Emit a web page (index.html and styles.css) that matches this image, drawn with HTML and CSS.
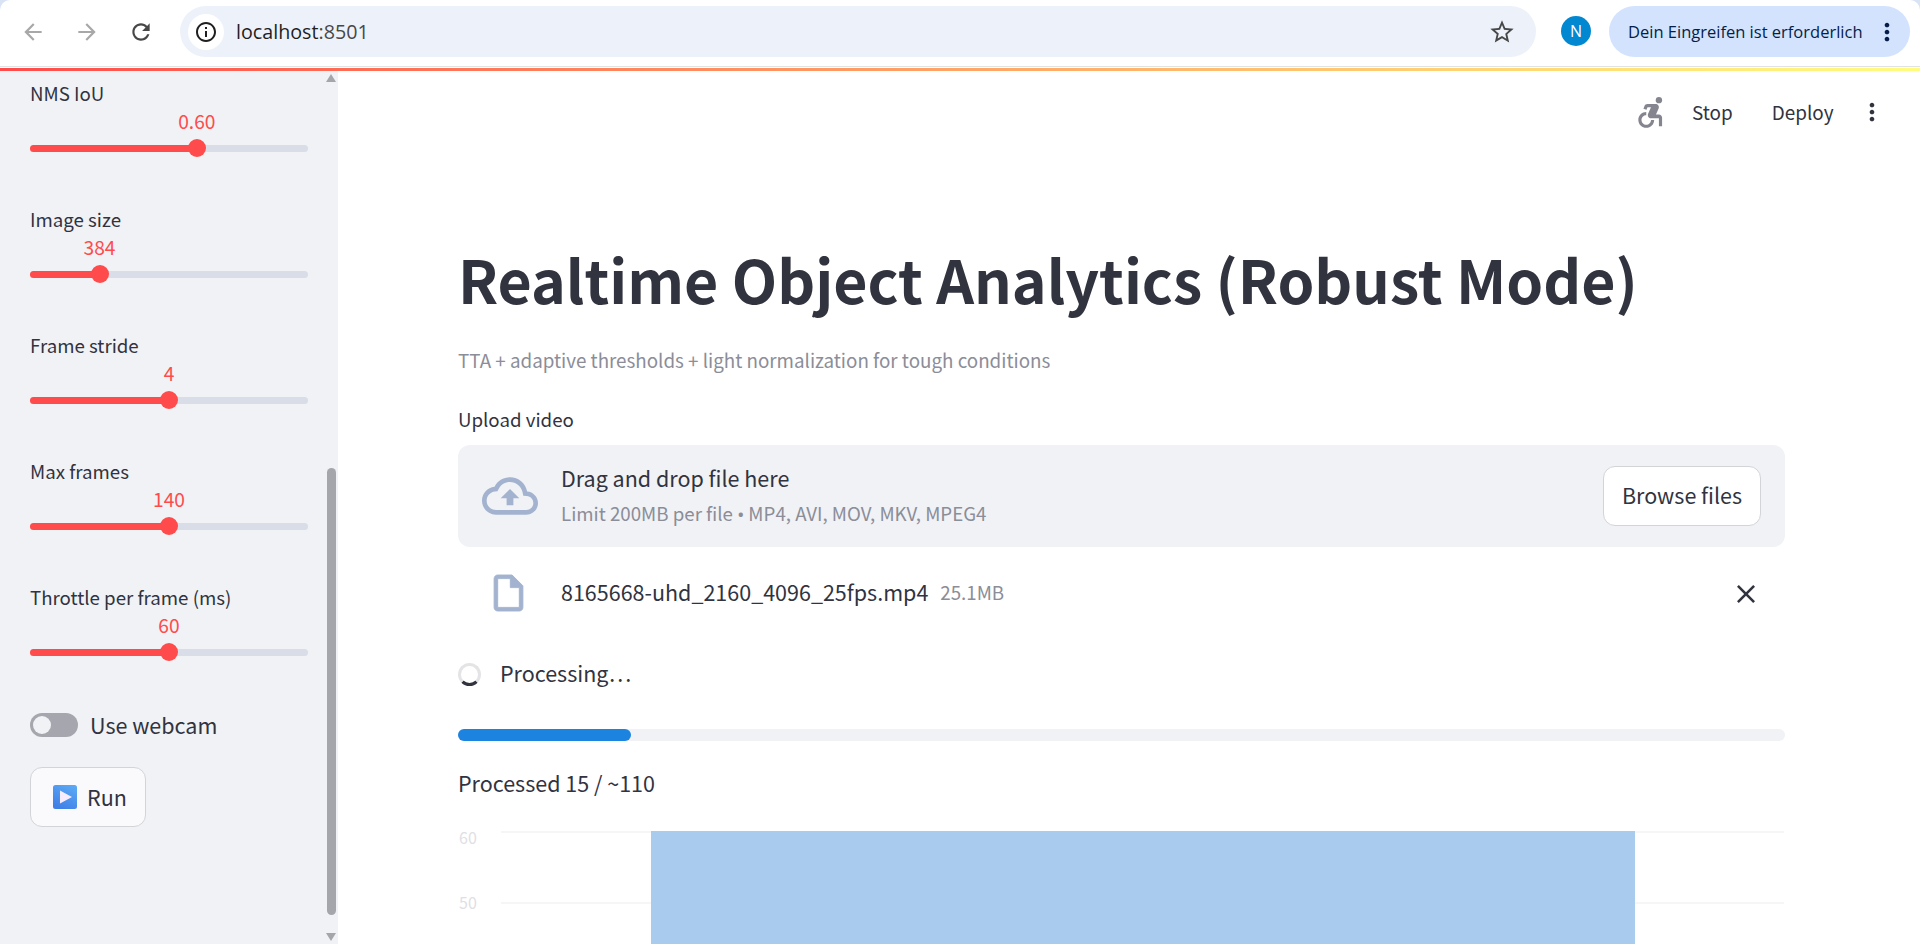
FILE: index.html
```html
<!DOCTYPE html>
<html lang="en">
<head>
<meta charset="utf-8">
<title>Realtime Object Analytics</title>
<link rel="stylesheet" href="styles.css">
</head>
<body>
<header class="browser">
  <div class="nav">
    <svg class="nav-icon dim" viewBox="0 0 24 24"><path d="M20 11H7.83l5.59-5.59L12 4l-8 8 8 8 1.41-1.41L7.83 13H20v-2z"/></svg>
    <svg class="nav-icon dim" viewBox="0 0 24 24"><path d="M12 4l-1.41 1.41L16.17 11H4v2h12.17l-5.58 5.59L12 20l8-8z"/></svg>
    <svg class="nav-icon" viewBox="0 0 24 24"><path d="M17.65 6.35C16.2 4.9 14.21 4 12 4c-4.42 0-7.99 3.58-7.99 8s3.57 8 7.99 8c3.73 0 6.84-2.55 7.73-6h-2.08c-.82 2.33-3.04 4-5.65 4-3.31 0-6-2.69-6-6s2.69-6 6-6c1.66 0 3.14.69 4.22 1.78L13 11h7V4l-2.35 2.35z"/></svg>
  </div>
  <div class="omnibox">
    <span class="site-chip"><svg class="info" viewBox="0 0 24 24"><path d="M11 7h2v2h-2zm0 4h2v6h-2zm1-9C6.48 2 2 6.48 2 12s4.48 10 10 10 10-4.48 10-10S17.52 2 12 2zm0 18c-4.41 0-8-3.59-8-8s3.59-8 8-8 8 3.59 8 8-3.59 8-8 8z"/></svg></span>
    <span class="url">localhost<span class="port">:8501</span></span>
    <svg class="star" viewBox="0 0 24 24"><path d="M22 9.24l-7.19-.62L12 2 9.19 8.63 2 9.24l5.46 4.73L5.82 21 12 17.27 18.18 21l-1.63-7.03L22 9.24zM12 15.4l-3.76 2.27 1-4.28-3.32-2.88 4.38-.38L12 6.1l1.71 4.04 4.38.38-3.32 2.88 1 4.28L12 15.4z"/></svg>
  </div>
  <span class="avatar">N</span>
  <div class="notice">
    <span class="notice-text">Dein Eingreifen ist erforderlich</span>
    <svg class="notice-dots" viewBox="0 0 24 24"><path d="M12 8c1.1 0 2-.9 2-2s-.9-2-2-2-2 .9-2 2 .9 2 2 2zm0 2c-1.1 0-2 .9-2 2s.9 2 2 2 2-.9 2-2-.9-2-2-2zm0 6c-1.1 0-2 .9-2 2s.9 2 2 2 2-.9 2-2-.9-2-2-2z"/></svg>
  </div>
</header>
<div class="rainbow"></div>
<div class="app">
  <aside class="sidebar">
    <div class="side-content">
      <div class="slider">
        <div class="slider-label">NMS IoU</div>
        <div class="slider-rail">
          <div class="slider-fill" style="width:60%"><span class="slider-value">0.60</span><span class="slider-thumb"></span></div>
        </div>
      </div>
      <div class="slider">
        <div class="slider-label">Image size</div>
        <div class="slider-rail">
          <div class="slider-fill" style="width:25%"><span class="slider-value">384</span><span class="slider-thumb"></span></div>
        </div>
      </div>
      <div class="slider">
        <div class="slider-label">Frame stride</div>
        <div class="slider-rail">
          <div class="slider-fill" style="width:50%"><span class="slider-value">4</span><span class="slider-thumb"></span></div>
        </div>
      </div>
      <div class="slider">
        <div class="slider-label">Max frames</div>
        <div class="slider-rail">
          <div class="slider-fill" style="width:50%"><span class="slider-value">140</span><span class="slider-thumb"></span></div>
        </div>
      </div>
      <div class="slider">
        <div class="slider-label">Throttle per frame (ms)</div>
        <div class="slider-rail">
          <div class="slider-fill" style="width:50%"><span class="slider-value">60</span><span class="slider-thumb"></span></div>
        </div>
      </div>
      <div class="toggle-row">
        <span class="toggle"><span class="toggle-knob"></span></span>
        <span class="toggle-label">Use webcam</span>
      </div>
      <button class="btn run-btn" type="button">
        <svg class="play" viewBox="0 0 24 24">
          <defs><linearGradient id="playGrad" x1="0.8" y1="0" x2="0.3" y2="1"><stop offset="0" stop-color="#5aa9f5"/><stop offset="1" stop-color="#3f7fe6"/></linearGradient></defs>
          <rect x="0" y="0" width="24" height="24" rx="2.5" fill="url(#playGrad)"/>
          <path d="M7 5.5L19 12L7 18.5z" fill="#f6ecfb"/>
        </svg>
        <span>Run</span>
      </button>
    </div>
    <div class="scrollbar">
      <span class="arrow-up"></span>
      <span class="scroll-thumb"></span>
      <span class="arrow-down"></span>
    </div>
  </aside>
  <main class="main">
    <div class="toolbar">
      <svg class="a11y" viewBox="0 0 24 24"><circle cx="17" cy="4.54" r="2"/><path d="M14 17h-2c0 1.65-1.35 3-3 3s-3-1.35-3-3 1.35-3 3-3v-2c-2.76 0-5 2.24-5 5s2.24 5 5 5 5-2.24 5-5zm3-3.5h-1.86l1.67-3.67C17.42 8.5 16.44 7 14.96 7h-5.2c-.81 0-1.54.47-1.87 1.2L7.22 10l1.92.53L9.79 9H12l-1.83 4.1c-.6 1.33.39 2.9 1.85 2.9H17v5h2v-5.5c0-1.1-.9-2-2-2z"/></svg>
      <span class="tool-link stop">Stop</span>
      <span class="tool-link deploy">Deploy</span>
      <svg class="tool-dots" viewBox="0 0 24 24"><path d="M12 8c1.1 0 2-.9 2-2s-.9-2-2-2-2 .9-2 2 .9 2 2 2zm0 2c-1.1 0-2 .9-2 2s.9 2 2 2 2-.9 2-2-.9-2-2-2zm0 6c-1.1 0-2 .9-2 2s.9 2 2 2 2-.9 2-2-.9-2-2-2z"/></svg>
    </div>
    <section class="content">
      <h1 class="title">Realtime Object Analytics (Robust Mode)</h1>
      <p class="caption">TTA + adaptive thresholds + light normalization for tough conditions</p>
      <div class="upload-label">Upload video</div>
      <div class="dropzone">
        <svg class="cloud" viewBox="0 0 24 24"><path d="M19.35 10.04C18.67 6.59 15.64 4 12 4 9.11 4 6.6 5.64 5.35 8.04 2.34 8.36 0 10.91 0 14c0 3.31 2.69 6 6 6h13c2.76 0 5-2.24 5-5 0-2.64-2.05-4.78-4.65-4.96zM19 18H6c-2.21 0-4-1.79-4-4 0-2.05 1.53-3.76 3.56-3.97l1.07-.11.5-.95C8.08 7.14 9.94 6 12 6c2.62 0 4.88 1.86 5.39 4.43l.3 1.5 1.53.11c1.56.1 2.78 1.41 2.78 2.96 0 1.65-1.35 3-3 3zM8 13h2.55v3h2.9v-3H16l-4-4z"/></svg>
        <div class="drop-text">
          <div class="drop-title">Drag and drop file here</div>
          <div class="drop-limit">Limit 200MB per file <span class="bullet">•</span> MP4, AVI, MOV, MKV, MPEG4</div>
        </div>
        <button class="btn browse-btn" type="button">Browse files</button>
      </div>
      <div class="file-row">
        <svg class="file-icon" viewBox="4 2 16 20"><path d="M14 2H6c-1.1 0-1.99.9-1.99 2L4 20c0 1.1.89 2 1.99 2H18c1.1 0 2-.9 2-2V8l-6-6zM6 20V4h7v5h5v11H6z"/></svg>
        <span class="file-name">8165668-uhd_2160_4096_25fps.mp4</span>
        <span class="file-size">25.1MB</span>
        <svg class="file-close" viewBox="5 5 14 14"><path d="M19 6.41L17.59 5 12 10.59 6.41 5 5 6.41 10.59 12 5 17.59 6.41 19 12 13.41 17.59 19 19 17.59 13.41 12z"/></svg>
      </div>
      <div class="status-row">
        <span class="spinner"></span>
        <span class="status-text">Processing…</span>
      </div>
      <div class="progress"><div class="progress-fill" style="width:13%"></div></div>
      <div class="processed">Processed 15 / ~110</div>
      <svg class="chart" viewBox="0 0 1326 113" width="1326" height="113">
        <line class="grid" x1="43" x2="1326" y1="1" y2="1"/>
        <line class="grid" x1="43" x2="1326" y1="72" y2="72"/>
        <rect class="bar" x="193" y="0" width="984" height="113"/>
        <text class="tick" x="1" y="13">60</text>
        <text class="tick" x="1" y="78">50</text>
      </svg>
    </section>
  </main>
</div>
</body>
</html>
```
FILE: styles.css
```css
* { box-sizing: border-box; }
html, body { margin: 0; height: 944px; overflow: hidden; }
body {
  background: #d8e3f6;
  color: #31333f;
  font-family: "Noto Sans CJK SC", "Noto Sans", sans-serif;
}

/* Browser chrome */
.browser {
  height: 67px;
  display: flex;
  align-items: flex-start;
  padding: 6px 10px 0 0;
  background: #fff;
  border-bottom: 1px solid #e2e2e2;
  border-radius: 10px 10px 0 0;
}
.nav { display: flex; align-items: center; height: 51px; padding-left: 20px; gap: 28px; width: 180px; }
.nav-icon { width: 26px; height: 26px; fill: #474747; flex: none; }
.nav-icon.dim { fill: #a8a8a8; }
.omnibox {
  width: 1356px; height: 51px;
  border-radius: 26px;
  background: #edf2fa;
  display: flex; align-items: center;
  padding-left: 8px;
}
.site-chip { width: 36px; height: 36px; border-radius: 50%; background: #fff; display: flex; align-items: center; justify-content: center; }
.info { width: 24px; height: 24px; fill: #1f1f1f; }
.url { margin-left: 12px; font: 19.7px/26px "Open Sans", sans-serif; color: #1f1f1f; }
.port { color: #474747; }
.star { width: 28px; height: 28px; margin-left: auto; margin-right: 20px; fill: #474747; }
.avatar {
  width: 30px; height: 30px; border-radius: 50%;
  margin: 10px 18px 0 25px;
  background: #0288d1; color: #fff;
  display: flex; align-items: center; justify-content: center;
  font: 16px/30px "Open Sans", sans-serif;
}
.notice {
  width: 301px; height: 51px; border-radius: 26px;
  background: #d3e3fd; color: #041e49;
  display: flex; align-items: center;
  padding-left: 19px;
}
.notice-text { font: 16.5px/22px "Open Sans", sans-serif; white-space: nowrap; }
.notice-dots { width: 28px; height: 28px; fill: #041e49; margin-left: 10px; flex: none; }

.rainbow {
  height: 4px;
  border-top: 1px solid #fff;
  background: linear-gradient(90deg, #ff4b4b, #fffd80);
  background-clip: padding-box;
}

/* App layout */
.app { display: flex; height: 873px; background: #fff; }

.sidebar { width: 338px; flex: none; background: #f0f2f6; display: flex; }
.side-content { width: 324px; padding: 9px 0 0 30px; }
.slider { height: 126px; width: 278px; }
.slider-label { height: 26px; font-size: 18.7px; line-height: 26px; }
.slider-rail {
  margin-top: 39px;
  height: 7px; border-radius: 4px;
  background: #d8dde8;
}
.slider-fill { position: relative; height: 7px; border-radius: 4px; background: #ff4b4b; }
.slider-thumb {
  position: absolute; right: -9px; top: -6px;
  width: 18px; height: 18px; border-radius: 50%;
  background: #ff4b4b;
}
.slider-value {
  position: absolute; right: -40px; width: 80px; top: -36px;
  text-align: center;
  color: #ff4b4b; font-size: 19.2px; line-height: 24px;
}
.toggle-row { display: flex; align-items: center; height: 24px; margin-top: 3px; }
.toggle { width: 48px; height: 24px; border-radius: 12px; background: #a6a7ae; padding: 3px; display: block; }
.toggle-knob { display: block; width: 18px; height: 18px; border-radius: 50%; background: #f0f2f6; }
.toggle-label { margin-left: 12px; font-size: 21.5px; line-height: 24px; }

.btn {
  font-family: inherit; color: #31333f;
  border: 1px solid #d3d4d8; border-radius: 12px;
  display: flex; align-items: center; justify-content: center;
  height: 60px; padding: 0 0 2px;
}
.run-btn { width: 116px; margin-top: 30px; background: #fafafc; gap: 10px; font-size: 21.5px; padding-left: 4px; }
.play { width: 24px; height: 24px; margin-top: 2px; }

.scrollbar { width: 14px; display: flex; flex-direction: column; align-items: center; padding: 3px 0 1px 0; }
.arrow-up { width: 0; height: 0; border: 5px solid transparent; border-top: 0; border-bottom: 8px solid #a5a6ab; }
.scroll-thumb { width: 9px; height: 447px; margin-top: 386px; border-radius: 5px; background: #a5a6ab; }
.arrow-down { width: 0; height: 0; margin-top: auto; border: 5px solid transparent; border-bottom: 0; border-top: 8px solid #a5a6ab; margin-bottom: 2px; }

/* Main */
.main { flex: 1; min-width: 0; }
.toolbar { height: 84px; display: flex; align-items: center; padding: 0 0 2px 1294px; }
.a11y { width: 38px; height: 38px; fill: #84858e; margin-right: 22px; flex: none; }
.tool-link { font-size: 18.9px; line-height: 28px; }
.deploy { margin-left: 39px; }
.tool-dots { width: 28px; height: 28px; fill: #31333f; margin-left: 24px; flex: none; }

.content { padding: 0 135px 0 120px; }
.title { margin: 84px 0 0; height: 80px; font-size: 59px; line-height: 80px; font-weight: 700; white-space: nowrap; }
.caption { margin: 26px 0 0; height: 30px; font-size: 18.8px; line-height: 30px; color: #8b8d98; }
.upload-label { margin-top: 30px; height: 28px; font-size: 18.7px; line-height: 28px; }
.dropzone {
  margin-top: 12px; height: 102px;
  background: #f0f2f6; border-radius: 12px;
  display: flex; align-items: center;
  padding: 0 24px 0 24px;
}
.cloud { width: 56px; height: 56px; fill: #a3b2cf; flex: none; margin-right: 23px; }
.drop-text { flex: 1; }
.drop-title { font-size: 21.5px; line-height: 30px; margin-bottom: 7px; margin-top: -3px; }
.drop-limit { font-size: 18.7px; line-height: 26px; color: #8b8d98; }
.bullet { font-family: "Noto Sans", sans-serif; }
.browse-btn { width: 158px; background: #fff; font-size: 21.5px; padding-bottom: 3px; }

.file-row { margin-top: 22px; height: 46px; display: flex; align-items: center; padding-left: 36px; }
.file-icon { width: 29px; height: 36px; fill: #a3b2cf; stroke: #a3b2cf; stroke-width: 0.5; margin: 2px 38px 0 0; flex: none; overflow: visible; }
.file-name { font-size: 21.5px; line-height: 30px; }
.file-size { margin-left: 12px; font-size: 18.7px; line-height: 30px; color: #8b8d98; }
.file-close { width: 18px; height: 18px; fill: #31333f; margin: 4px 30px 0 auto; flex: none; }

.status-row { margin-top: 41px; height: 36px; display: flex; align-items: center; }
.spinner {
  width: 23px; height: 23px; border-radius: 50%;
  border: 3px solid #e4e4e6; border-bottom-color: #31333f;
  flex: none;
}
.status-text { margin-left: 19px; font-size: 21.5px; line-height: 30px; padding-bottom: 2px; }

.progress { margin-top: 37px; height: 12px; border-radius: 6px; background: #f0f2f6; }
.progress-fill { height: 12px; border-radius: 6px; background: #1c83e1; }

.processed { margin-top: 27px; height: 30px; font-size: 21.5px; line-height: 30px; }

.chart { display: block; margin-top: 33px; }
.grid { stroke: #f3f3f5; stroke-width: 1.5; }
.bar { fill: #a9cbee; }
.tick { fill: #dfe0e5; font-size: 16px; }
```
